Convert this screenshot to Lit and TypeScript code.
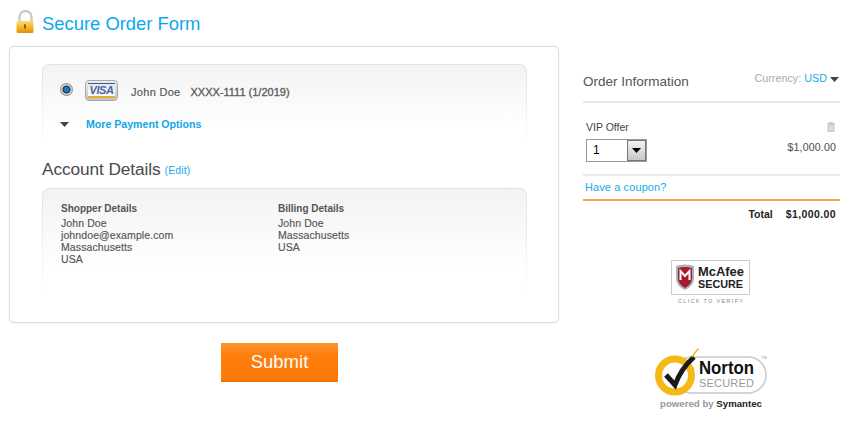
import { LitElement, html, css, svg } from "lit";
import { customElement } from "lit/decorators.js";

const tri = html`<svg class="tri" width="9" height="5" viewBox="0 0 9 5"><path d="M0 0h9L4.500 5z" fill="#444"/></svg>`;

@customElement("app-root")
export class AppRoot extends LitElement {
  static styles = css`
    :host { display: block; width: 850px; height: 422px; background: #fff; overflow: hidden; font-family: "Liberation Sans", Arial, sans-serif; color: #555; font-size: 11px; }
    .page { display: flex; align-items: flex-start; padding: 0 10px 0 9px; }
    .left { width: 550px; flex: none; }
    .title { display: flex; align-items: center; height: 46px; gap: 6px; padding: 0 0 3px 6px; box-sizing: border-box; }
    .title h1 { margin: 4px 0 0; font-size: 18.4px; line-height: 22px; font-weight: 400; color: #0ca8f0; }
    .card { border: 1px solid #dcdcdc; border-radius: 5px; height: 277px; box-sizing: border-box; padding: 17px 31px 0 32px; box-shadow: 0 0 2px #eee; }
    .panel { border: 1px solid transparent; border-bottom: none; border-radius: 8px 8px 0 0; background: linear-gradient(#f3f3f3, #fff 80%) padding-box, linear-gradient(#e2e2e2, #f4f4f4 75%, #fff) border-box; box-sizing: border-box; }
    .pay { height: 78px; padding: 0 0 0 17px; }
    .pay-row { display: flex; align-items: center; height: 54px; }
    .radio { width: 13px; height: 13px; border-radius: 50%; background: radial-gradient(circle at 50% 50%, #1a7ab8 0 2.5px, #10283c 3.5px, #dfe3e6 4.5px, #7d7d7d 6.5px); flex: none; margin-top: -5px; }
    .visa { width: 33px; height: 21px; margin: -3px 13px 0 12px; box-sizing: border-box; border: 1px solid #a8a8a8; border-radius: 4px; background: linear-gradient(#ececec, #c4c4c4); padding: 2px; flex: none; }
    .visa-in { height: 100%; display: flex; flex-direction: column; background: linear-gradient(#dfe5ee, #fff); overflow: hidden; }
    .visa-in i { display: block; height: 1px; background: #3a5a98; flex: none; }
    .visa-in i.y { background: #e8ab2c; height: 2px; }
    .visa-in b { flex: 1; font: italic 700 11px/12px "Liberation Sans", sans-serif; color: #4a66a0; text-align: center; letter-spacing: -0.4px; }
    .holder { font-size: 11px; letter-spacing: .3px; -webkit-text-stroke: .2px #666; }
    .num { margin-left: 10px; -webkit-text-stroke: .35px #666; }
    .more { display: flex; align-items: center; height: 20px; margin-top: -5px; color: #12a5ea; font-weight: 700; font-size: 10.6px; }
    .more .tri { margin-right: 17px; }
    h2 { margin: 0; font-size: 17.3px; font-weight: 400; color: #4a4a4a; line-height: 22px; letter-spacing: -.1px; display: flex; align-items: baseline; gap: 4px; padding-top: 16px; }
    h2 a { font-size: 10.5px; color: #1ba9ec; letter-spacing: .1px; position: relative; top: -1px; }
    .details { margin-top: 6px; height: 103px; padding: 13px 18px 0; display: flex; }
    .col { width: 217px; line-height: 12px; font-size: 10.5px; color: #555; letter-spacing: .1px; -webkit-text-stroke: .15px #555; }
    .col b { display: block; font-size: 10px; letter-spacing: 0; margin-bottom: 2px; line-height: 13px; -webkit-text-stroke: 0; }
    .submit-wrap { padding: 20px 0 0 212px; }
    .submit { width: 117px; height: 39px; border: none; border-bottom: 1px solid #e8720c; background: linear-gradient(#ff9530, #ff7f0e 30%, #fa7806); color: #fff; font: 400 18.5px "Liberation Sans", sans-serif; padding: 0; display: block; }
    .right { margin-left: 24px; width: 257px; flex: none; padding-top: 60px; }
    .oh { display: flex; justify-content: space-between; height: 43px; border-bottom: 2px solid #e8e8e8; box-sizing: border-box; }
    .oh span.t { font-size: 13.5px; color: #555; line-height: 20px; margin-top: 12px; }
    .cur { font-size: 10.8px; color: #aaa; margin-top: 11px; display: flex; gap: 3px; align-items: baseline; line-height: 14px; padding-right: 1px; }
    .cur a { color: #1ba9ec; }
    .cur .tri { margin-bottom: 2px; }
    .item { display: flex; justify-content: space-between; height: 73px; border-bottom: 2px solid #ebebeb; box-sizing: border-box; padding: 17px 4px 0 3px; }
    .vip { font-size: 10.5px; color: #444; line-height: 14px; margin-bottom: 5px; }
    .sel { width: 61px; height: 23px; border: 1px solid #999; box-sizing: border-box; display: flex; background: #fff; }
    .sel span { flex: 1; font-size: 12px; color: #000; line-height: 21px; padding-left: 6px; letter-spacing: .3px; }
    .sel i { width: 17px; border: 1px solid #777; background: linear-gradient(#f2f2f2, #c8c8c8); display: flex; align-items: center; justify-content: center; }
    .price { text-align: right; display: flex; flex-direction: column; align-items: flex-end; }
    .price svg { margin: 2px 1px 0 0; }
    .price span { margin-top: 9px; color: #555; letter-spacing: .2px; font-size: 10.5px; -webkit-text-stroke: .1px #555; }
    .coupon { height: 23px; line-height: 22px; border-bottom: 2px solid #f7a24c; padding-left: 2px; color: #1ba9ec; box-sizing: content-box; letter-spacing: .1px; }
    .total { display: flex; justify-content: flex-end; gap: 13px; padding: 6px 4px 0 0; font-weight: 700; font-size: 10.5px; color: #222; line-height: 14px; }
    .total span:last-child { letter-spacing: .4px; }
    .mcafee { display: block; margin: 39px 0 0 88px; }
    .norton { display: block; margin: 39px 0 0 71px; }
  `;

  render() {
    return html`<div class="page">
      <div class="left">
        <div class="title">
          <svg width="21" height="23" viewBox="0 0 21 23">
            <defs><linearGradient id="lk" x1="0" y1="0" x2="0" y2="1"><stop offset="0" stop-color="#f8dc78"/><stop offset=".6" stop-color="#f2b21f"/><stop offset="1" stop-color="#e08d10"/></linearGradient></defs>
            <path d="M4.500 12V7a6 6 0 0 1 12 0v5" fill="none" stroke="#c8c8c8" stroke-width="2.400"/>
            <rect x="1.500" y="11" width="17" height="12" rx="1.500" fill="url(#lk)"/>
            <path d="M10 14.500v4" stroke="#8a5a10" stroke-width="2"/>
          </svg>
          <h1>Secure Order Form</h1>
        </div>
        <div class="card">
          <div class="panel pay">
            <div class="pay-row">
              <span class="radio"></span>
              <span class="visa"><span class="visa-in"><i></i><b>VISA</b><i class="y"></i></span></span>
              <span class="holder">John Doe</span><span class="num">XXXX-1111 (1/2019)</span>
            </div>
            <div class="more">${tri}<span>More Payment Options</span></div>
          </div>
          <h2>Account Details <a>(Edit)</a></h2>
          <div class="panel details">
            <div class="col"><b>Shopper Details</b>John Doe<br>johndoe@example.com<br>Massachusetts<br>USA</div>
            <div class="col"><b>Billing Details</b>John Doe<br>Massachusetts<br>USA</div>
          </div>
        </div>
        <div class="submit-wrap"><button class="submit">Submit</button></div>
      </div>
      <div class="right">
        <div class="oh"><span class="t">Order Information</span><span class="cur">Currency: <a>USD</a> ${tri}</span></div>
        <div class="item">
          <div>
            <div class="vip">VIP Offer</div>
            <div class="sel"><span>1</span><i><svg width="9" height="5" viewBox="0 0 9 5"><path d="M0 0h9L4.500 5z" fill="#000"/></svg></i></div>
          </div>
          <div class="price">
            <svg width="8" height="10" viewBox="0 0 8 10"><path d="M0 1.500h8M2.500 1.500V.5h3v1M1 2.500h6V10H1z" fill="#d4d4d4" stroke="#bdbdbd" stroke-width=".7"/><path d="M3 4v4M5 4v4" stroke="#eee" stroke-width=".8"/></svg>
            <span>$1,000.00</span>
          </div>
        </div>
        <div class="coupon">Have a coupon?</div>
        <div class="total"><span>Total</span><span>$1,000.00</span></div>
        ${this.mcafee()}
        ${this.norton()}
      </div>
    </div>`;
  }

  mcafee() {
    return svg`<svg class="mcafee" width="80" height="46" viewBox="0 0 80 46">
      <rect x=".5" y=".5" width="78" height="34" fill="#fff" stroke="#ccc"/>
      <path d="M5 6q9-3 18 0v12q0 8-9 12q-9-4-9-12z" fill="#a9b2b8"/>
      <path d="M7 8q7-2 14 0v10q0 6-7 10q-7-4-7-10z" fill="#a31c2c"/>
      <path d="M9.500 20v-9l4.500 5 4.500-5v9" fill="none" stroke="#fff" stroke-width="2"/>
      <text x="27" y="16" font-family="Liberation Sans" font-weight="700" font-size="12" fill="#222" textLength="46" lengthAdjust="spacingAndGlyphs">McAfee</text>
      <text x="27" y="28" font-family="Liberation Sans" font-weight="700" font-size="11.500" fill="#222" textLength="45" lengthAdjust="spacingAndGlyphs">SECURE</text>
      <text x="7" y="43" font-family="Liberation Sans" font-size="5.500" fill="#888" textLength="65">CLICK TO VERIFY</text>
    </svg>`;
  }

  norton() {
    return svg`<svg class="norton" width="114" height="66" viewBox="0 0 114 66">
      <rect x="20" y="12" width="92" height="36" rx="18" fill="#fff" stroke="#c9c9c9" stroke-width="1.500"/>
      <circle cx="21" cy="30.500" r="16.500" fill="#fff" stroke="#f5b915" stroke-width="7"/>
      <path d="M12 30l9 10c4-11 10-20 19-28" fill="none" stroke="#1a1a1a" stroke-width="5"/>
      <path d="M38 12l5-7 2-1" stroke="#f5b915" stroke-width="1.500" fill="none"/>
      <text x="45" y="29" font-family="Liberation Sans" font-weight="700" font-size="19" fill="#111" textLength="55" lengthAdjust="spacingAndGlyphs">Norton</text>
      <text x="45" y="42" font-family="Liberation Sans" font-size="11" fill="#999" textLength="55">SECURED</text>
      <text x="107" y="14" font-family="Liberation Sans" font-size="4" fill="#999">TM</text>
      <text x="6" y="62" font-family="Liberation Sans" font-weight="700" font-size="9" fill="#999" textLength="102" lengthAdjust="spacingAndGlyphs">powered by <tspan fill="#222">Symantec</tspan></text>
    </svg>`;
  }
}
